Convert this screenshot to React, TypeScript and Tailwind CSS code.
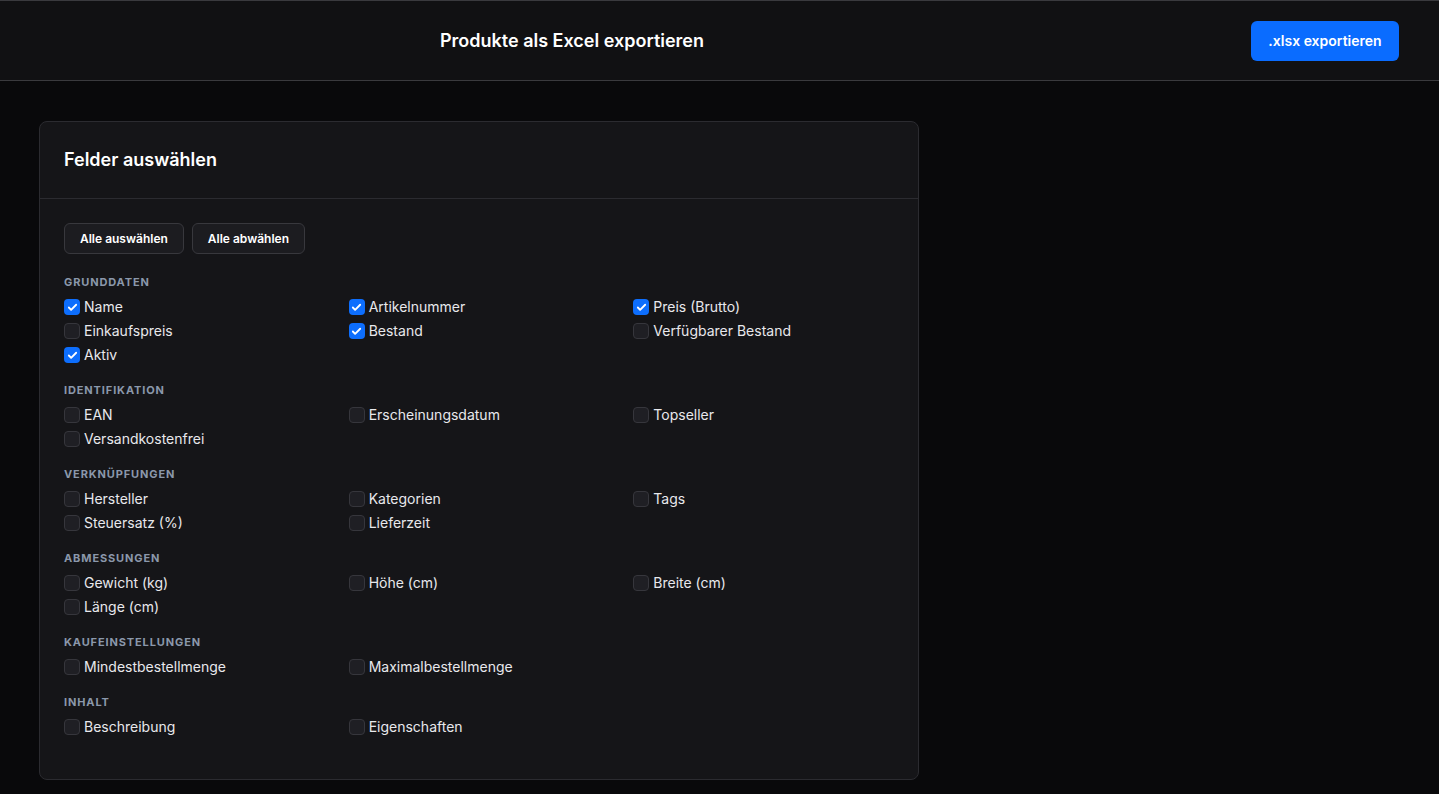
import { Check } from "lucide-react";

type Field = { label: string; checked?: boolean };
type Group = { title: string; fields: Field[] };

const groups: Group[] = [
  {
    title: "Grunddaten",
    fields: [
      { label: "Name", checked: true },
      { label: "Artikelnummer", checked: true },
      { label: "Preis (Brutto)", checked: true },
      { label: "Einkaufspreis" },
      { label: "Bestand", checked: true },
      { label: "Verfügbarer Bestand" },
      { label: "Aktiv", checked: true },
    ],
  },
  {
    title: "Identifikation",
    fields: [{ label: "EAN" }, { label: "Erscheinungsdatum" }, { label: "Topseller" }, { label: "Versandkostenfrei" }],
  },
  {
    title: "Verknüpfungen",
    fields: [{ label: "Hersteller" }, { label: "Kategorien" }, { label: "Tags" }, { label: "Steuersatz (%)" }, { label: "Lieferzeit" }],
  },
  {
    title: "Abmessungen",
    fields: [{ label: "Gewicht (kg)" }, { label: "Höhe (cm)" }, { label: "Breite (cm)" }, { label: "Länge (cm)" }],
  },
  {
    title: "Kaufeinstellungen",
    fields: [{ label: "Mindestbestellmenge" }, { label: "Maximalbestellmenge" }],
  },
  {
    title: "Inhalt",
    fields: [{ label: "Beschreibung" }, { label: "Eigenschaften" }],
  },
];

function Checkbox({ checked }: { checked?: boolean }) {
  if (checked) {
    return (
      <span className="flex h-4 w-4 shrink-0 items-center justify-center rounded-[4px] bg-[#0d6efd]">
        <Check className="h-[11px] w-[11px] text-white" strokeWidth={4} />
      </span>
    );
  }
  return <span className="h-4 w-4 shrink-0 rounded-[4px] border border-[#36363c] bg-[#1f1f24]" />;
}

export default function App() {
  return (
    <div className="min-h-screen bg-[#09090b] font-['Inter',sans-serif] text-[#e4e4e7]">
      <header className="flex h-[81px] items-center border-t border-b border-[#3a3a3e] bg-[#111113] px-10">
        <div className="mr-[147px] flex flex-1 justify-center">
          <h1 className="text-lg font-semibold text-white">Produkte als Excel exportieren</h1>
        </div>
        <button className="h-10 w-[148px] rounded-md bg-[#0a6cff] text-sm font-semibold text-white">.xlsx exportieren</button>
      </header>

      <main className="px-[39px] pt-10 pb-4">
        <div className="w-[880px] rounded-lg border border-[#2b2b30] bg-[#151518]">
          <div className="border-b border-[#2b2b30] px-6 py-6">
            <h2 className="text-lg leading-7 font-semibold text-white">Felder auswählen</h2>
          </div>
          <div className="px-6 pt-6 pb-10">
            <div className="mb-5 flex gap-2">
              <button className="h-[31px] rounded-md border border-[#38383d] bg-[#1c1c20] px-[15px] text-xs font-semibold text-white">Alle auswählen</button>
              <button className="h-[31px] rounded-md border border-[#38383d] bg-[#1c1c20] px-[15px] text-xs font-semibold text-white">Alle abwählen</button>
            </div>
            <div className="space-y-[15px]">
              {groups.map((g) => (
                <section key={g.title}>
                  <h3 className="mb-[5px] text-[11px] leading-4 font-bold tracking-[0.08em] text-[#8b98ab] uppercase">{g.title}</h3>
                  <div className="grid grid-cols-3 gap-x-6">
                    {g.fields.map((f) => (
                      <label key={f.label} className="flex h-6 items-center gap-1 text-sm text-[#e8e8ec]">
                        <Checkbox checked={f.checked} />
                        <span>{f.label}</span>
                      </label>
                    ))}
                  </div>
                </section>
              ))}
            </div>
          </div>
        </div>
      </main>
    </div>
  );
}
